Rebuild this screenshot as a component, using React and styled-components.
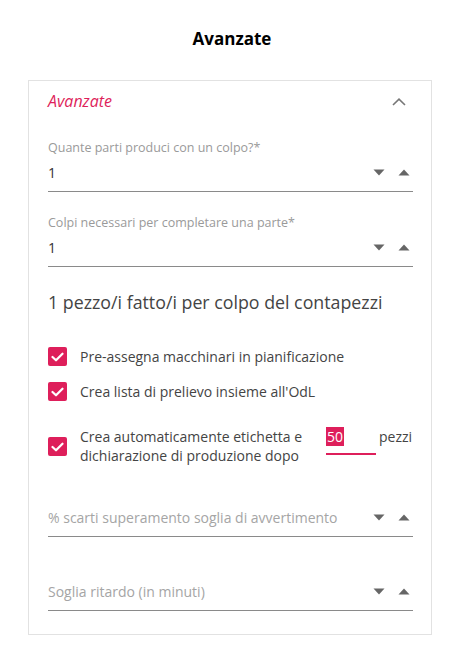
import React from "react";
import styled, { createGlobalStyle } from "styled-components";

const GlobalStyle = createGlobalStyle`
  html, body { margin: 0; padding: 0; background: #fff; }
  body { font-family: "Open Sans", "Noto Sans", sans-serif; color: #333; }
  * { box-sizing: border-box; }
`;

const PINK = "#de1f5b";

const Page = styled.div`
  width: 471px;
  padding-top: 27px;
  padding-bottom: 21px;
`;

const Title = styled.h1`
  margin: 0 0 30px 0;
  padding-right: 7px;
  text-align: center;
  font-size: 17px;
  line-height: 23px;
  font-weight: 700;
  color: #000;
`;

const Card = styled.section`
  margin-left: 28px;
  width: 404px;
  border: 1px solid #e2e2e2;
  padding: 0 18px 23px 19px;
`;

const Header = styled.div`
  height: 39px;
  display: flex;
  align-items: center;
  justify-content: space-between;
`;

const HeaderTitle = styled.span`
  font-style: italic;
  font-size: 16px;
  color: ${PINK};
  font-weight: 400;
`;

const Chevron = styled.svg`
  width: 14px;
  height: 8px;
  margin-right: 7px;
  margin-top: 2px;
`;

const Field = styled.div`
  margin-top: ${(p) => p.$mt}px;
  border-bottom: 1px solid #8a8a8a;
  padding-bottom: ${(p) => p.$pb}px;
`;

const Label = styled.div`
  font-size: 12.5px;
  line-height: 18px;
  color: #9a9a9a;
  margin-bottom: 5px;
`;

const InputRow = styled.div`
  display: flex;
  align-items: center;
  height: 20px;
`;

const Value = styled.span`
  flex: 1;
  font-size: 14px;
  color: ${(p) => (p.$placeholder ? "#a5a5a5" : "#333")};
`;

const Spinner = styled.div`
  display: flex;
  align-items: center;
  gap: 13px;
  margin-right: 3px;
`;

const Tri = styled.svg`
  width: 12px;
  height: 7px;
  display: block;
`;

const Summary = styled.p`
  margin: 23px 0 0 0;
  font-size: 17.8px;
  line-height: 24px;
  color: #444;
`;

const CheckRow = styled.label`
  display: flex;
  align-items: ${(p) => (p.$top ? "flex-start" : "center")};
  margin-top: ${(p) => p.$mt}px;
  font-size: 14px;
  line-height: 19px;
  color: #444;
`;

const Box = styled.span`
  flex: none;
  width: 19px;
  height: 19px;
  border-radius: 2px;
  background: ${PINK};
  display: flex;
  align-items: center;
  justify-content: center;
  margin-right: 13px;
  margin-top: ${(p) => p.$mt || 0}px;
`;

const CheckText = styled.span`
  width: ${(p) => (p.$w ? p.$w + "px" : "auto")};
`;

const QtyInput = styled.span`
  width: 50px;
  margin-left: 14px;
  height: 28px;
  border-bottom: 2px solid ${PINK};
  display: flex;
  align-items: flex-start;
`;

const Selected = styled.span`
  background: ${PINK};
  color: #fff;
  font-size: 14px;
  line-height: 19px;
  padding: 0 1px;
`;

const Unit = styled.span`
  margin-left: 3px;
`;

const Check = () => (
  <svg width="13" height="10" viewBox="0 0 13 10">
    <path d="M1.5 5 L5 8.3 L11.5 1.7" fill="none" stroke="#fff" strokeWidth="2.2" strokeLinecap="round" strokeLinejoin="round" />
  </svg>
);

const Spin = () => (
  <Spinner>
    <Tri viewBox="0 0 12 7">
      <path d="M0.5 0.5 H11.5 L6 6.5 Z" fill="#666" />
    </Tri>
    <Tri viewBox="0 0 12 7">
      <path d="M0.5 6.5 H11.5 L6 0.5 Z" fill="#666" />
    </Tri>
  </Spinner>
);

export default function App() {
  return (
    <>
      <GlobalStyle />
      <Page>
        <Title>Avanzate</Title>
        <Card>
          <Header>
            <HeaderTitle>Avanzate</HeaderTitle>
            <Chevron viewBox="0 0 14 8">
              <path d="M1 7 L7 1.2 L13 7" fill="none" stroke="#777" strokeWidth="1.6" />
            </Chevron>
          </Header>

          <Field $mt={19} $pb={9}>
            <Label>Quante parti produci con un colpo?*</Label>
            <InputRow>
              <Value>1</Value>
              <Spin />
            </InputRow>
          </Field>

          <Field $mt={22} $pb={9}>
            <Label>Colpi necessari per completare una parte*</Label>
            <InputRow>
              <Value>1</Value>
              <Spin />
            </InputRow>
          </Field>

          <Summary>1 pezzo/i fatto/i per colpo del contapezzi</Summary>

          <CheckRow $mt={33}>
            <Box><Check /></Box>
            <span>Pre-assegna macchinari in pianificazione</span>
          </CheckRow>
          <CheckRow $mt={16}>
            <Box><Check /></Box>
            <span>Crea lista di prelievo insieme all'OdL</span>
          </CheckRow>
          <CheckRow $mt={26} $top>
            <Box $mt={10}><Check /></Box>
            <CheckText $w={232}>
              Crea automaticamente etichetta e dichiarazione di produzione dopo
            </CheckText>
            <QtyInput>
              <Selected>50</Selected>
            </QtyInput>
            <Unit>pezzi</Unit>
          </CheckRow>

          <Field $mt={42} $pb={9}>
            <InputRow>
              <Value $placeholder>% scarti superamento soglia di avvertimento</Value>
              <Spin />
            </InputRow>
          </Field>

          <Field $mt={44} $pb={9}>
            <InputRow>
              <Value $placeholder>Soglia ritardo (in minuti)</Value>
              <Spin />
            </InputRow>
          </Field>
        </Card>
      </Page>
    </>
  );
}
